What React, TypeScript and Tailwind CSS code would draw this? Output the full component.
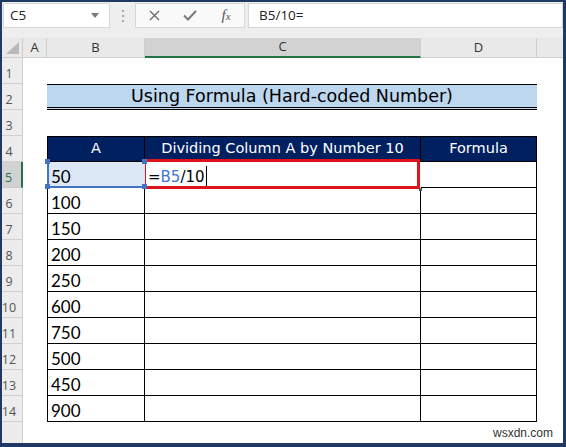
import React from "react";

const values: Record<number, number> = {
  5: 50, 6: 100, 7: 150, 8: 200, 9: 250, 10: 600, 11: 750, 12: 500, 13: 450, 14: 900,
};

const comic = "font-['DejaVu_Sans',sans-serif]";

function RowHead({ n, active }: { n?: number; active?: boolean }) {
  if (active) {
    return (
      <div className="flex items-end justify-center pb-[3px] pr-[6px] leading-none bg-[#d2d2d2] border-b border-[#c8c8c8] border-r-2 border-r-[#217346] text-[12.5px] text-[#217346]">
        {n}
      </div>
    );
  }
  return (
    <div className="flex items-end justify-center pb-[3px] pr-[6px] leading-none bg-[#ececec] border-b border-r border-[#d0d0d0] text-[12.5px] text-[#555]">
      {n}
    </div>
  );
}

function Blank() {
  return <div className="bg-white" />;
}

function FormulaBar() {
  return (
    <div className="h-[36px] shrink-0 bg-[#eeeeee] flex items-start pt-[1px] font-['Open_Sans',sans-serif]">
      <div className="ml-[1px] w-[107px] h-[25px] bg-white border border-[#d6d6d6] flex items-center justify-between pl-[6px] pr-[10px] text-[13.5px] text-[#222]">
        <span>C5</span>
        <svg width="8" height="5" viewBox="0 0 8 5">
          <path d="M0 0 L8 0 L4 5 Z" fill="#7a7a7a" />
        </svg>
      </div>
      <div className="w-[25px] h-[25px] flex flex-col items-center justify-center gap-[3px]">
        <span className="w-[2px] h-[2px] bg-[#a8a8a8]" />
        <span className="w-[2px] h-[2px] bg-[#a8a8a8]" />
        <span className="w-[2px] h-[2px] bg-[#a8a8a8]" />
      </div>
      <div className="w-[110px] h-[25px] bg-[#f9f9f9] border border-[#d6d6d6] flex items-center">
        <div className="w-[36px] flex justify-center">
          <svg width="11" height="11" viewBox="0 0 11 11">
            <path d="M1 1 L10 10 M10 1 L1 10" stroke="#6b6b6b" strokeWidth="1.4" />
          </svg>
        </div>
        <div className="w-[36px] flex justify-center">
          <svg width="14" height="11" viewBox="0 0 14 11">
            <path d="M1 5.5 L5 9.5 L13 1" stroke="#7a7a7a" strokeWidth="2" fill="none" />
          </svg>
        </div>
        <div className="w-[36px] flex justify-center font-['Liberation_Serif',serif] italic text-[15px] text-[#555]">
          <span>f</span>
          <span className="text-[11px] mt-[4px]">x</span>
        </div>
      </div>
      <div className="ml-[3px] flex-1 h-[25px] bg-white border border-[#d6d6d6] flex items-center pl-[10px] text-[13.5px] text-[#222]">
        B5/10=
      </div>
    </div>
  );
}

function ColHeaders() {
  const base = "flex items-center justify-center bg-[#e9e9e9] border-b border-r border-[#cfcfcf] text-[13px] text-[#333]";
  return (
    <>
      <div className="relative bg-[#e9e9e9] border-b border-r border-[#cfcfcf]">
        <svg className="absolute right-[3px] bottom-[3px]" width="13" height="12" viewBox="0 0 13 12">
          <path d="M13 0 L13 12 L0 12 Z" fill="#b9b9b9" />
        </svg>
      </div>
      <div className={base}>A</div>
      <div className={base}>B</div>
      <div className="flex items-center justify-center bg-[#d2d2d2] border-r border-[#cfcfcf] border-b-2 border-b-[#217346] text-[13px] text-[#333]">
        C
      </div>
      <div className={base}>D</div>
      <div className="bg-[#e9e9e9] border-b border-[#cfcfcf]" />
    </>
  );
}

function DataRow({ n }: { n: number }) {
  const v = values[n];
  const cell = "bg-white border-b border-r border-black";
  if (n === 5) {
    return (
      <>
        <RowHead n={n} active />
        <Blank />
        <div className="relative z-20 flex items-end pb-[1px] pl-[2px] leading-none bg-[#dde8f6] border-l-2 border-l-[#4472c4] border-b-2 border-b-[#4472c4] text-[17px] text-black font-['Lato',sans-serif]">
          {v}
          <span className="absolute -left-[4px] -top-[3px] w-[5px] h-[5px] bg-[#4472c4]" />
          <span className="absolute -left-[4px] -bottom-[3px] w-[5px] h-[5px] bg-[#4472c4]" />
          <span className="absolute -right-[2px] -bottom-[3px] w-[5px] h-[5px] bg-[#4472c4]" />
          <span className="absolute -right-[2px] -top-[3px] w-[5px] h-[5px] bg-[#4472c4]" />
        </div>
        <div className={`relative z-10 flex items-end pb-[2px] pl-[3px] leading-none bg-white text-[15px] text-black ${comic}`}>
          <span className="mb-[1px]">=</span>
          <span className="mb-[1px] text-[#3f78cf]">B5</span>
          <span className="mb-[1px]">/10</span>
          <span className="ml-[1px] w-[1px] h-[20px] bg-black" />
          <div className="absolute -left-[2px] -top-[3px] right-[1px] -bottom-[1px] border-[3px] border-[#e0131a]" />
          <span className="absolute -right-[1px] -bottom-[3px] w-[3px] h-[3px] bg-[#555]" />
        </div>
        <div className={cell} />
        <Blank />
      </>
    );
  }
  return (
    <>
      <RowHead n={n} />
      <Blank />
      <div className={`${cell} border-l flex items-end pb-[2px] pl-[3px] leading-none text-[17px] text-black font-['Lato',sans-serif]`}>{v}</div>
      <div className={cell} />
      <div className={cell} />
      <Blank />
    </>
  );
}

export default function App() {
  return (
    <div className="relative w-[566px] h-[447px] flex flex-col overflow-hidden bg-white border-t-2 border-l-2 border-r-[3px] border-b-4 border-[#1f3864] font-['Open_Sans',sans-serif]">
      <FormulaBar />
      <div className="flex-1 grid grid-cols-[21px_24px_98px_276px_116px_26px] grid-rows-[20px_repeat(14,26px)_1fr]">
        <ColHeaders />

        <RowHead n={1} />
        <Blank />
        <Blank />
        <Blank />
        <Blank />
        <Blank />

        <RowHead n={2} />
        <Blank />
        <div className={`col-span-3 flex items-center justify-center pt-[1px] bg-[#bdd7ee] border-t border-black border-b-[3px] border-double text-[17.5px] text-black ${comic}`}>
          Using Formula (Hard-coded Number)
        </div>
        <Blank />

        <RowHead n={3} />
        <Blank />
        <Blank />
        <Blank />
        <Blank />
        <Blank />

        <RowHead n={4} />
        <Blank />
        <div className={`flex items-center justify-center bg-[#002060] border border-black text-white text-[14.5px] ${comic}`}>A</div>
        <div className={`flex items-center justify-center bg-[#002060] border-y border-r border-black text-white text-[14.5px] ${comic}`}>
          Dividing Column A by Number 10
        </div>
        <div className={`flex items-center justify-center bg-[#002060] border-y border-r border-black text-white text-[14.5px] ${comic}`}>
          Formula
        </div>
        <Blank />

        {[5, 6, 7, 8, 9, 10, 11, 12, 13, 14].map((n) => (
          <DataRow key={n} n={n} />
        ))}

        <div className="bg-[#ececec] border-r border-[#d0d0d0]" />
        <Blank />
        <Blank />
        <Blank />
        <Blank />
        <Blank />
      </div>
      <div className="absolute right-[10px] bottom-[1px] text-[12px] text-[#333] font-['Liberation_Sans',sans-serif]">
        wsxdn.com
      </div>
    </div>
  );
}
